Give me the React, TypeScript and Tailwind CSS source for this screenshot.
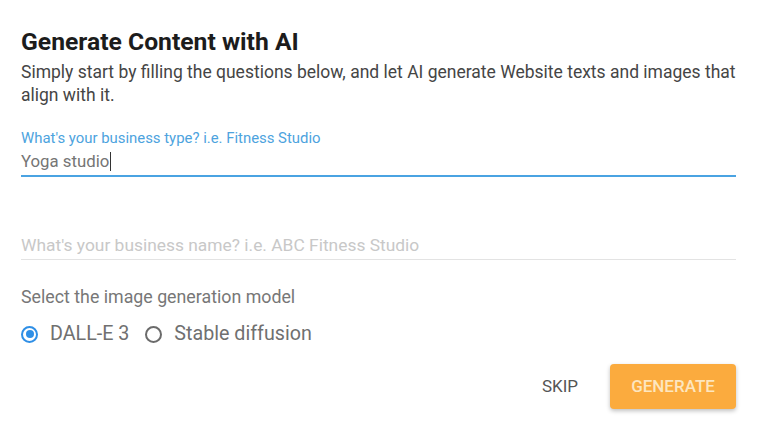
import { useState } from "react";

const font = { fontFamily: "Roboto, 'Liberation Sans', sans-serif" };

const Radio = ({ checked, label, onClick }: { checked: boolean; label: string; onClick: () => void }) => (
  <label className="flex items-center gap-[12px] cursor-pointer" onClick={onClick}>
    <span
      className={`flex h-[17px] w-[17px] items-center justify-center rounded-full border-2 ${
        checked ? "border-[#2f8fe6]" : "border-[#6b6b6b]"
      }`}
    >
      {checked && <span className="h-[8px] w-[8px] rounded-full bg-[#2f8fe6]" />}
    </span>
    <span className="text-[19.7px] leading-[24px] text-[#707070]">{label}</span>
  </label>
);

const App = () => {
  const [model, setModel] = useState("dalle");

  return (
    <div className="min-h-[435px] w-[761px] bg-white pl-[21px] pr-[25px] pt-[27px]" style={font}>
      {/* Header */}
      <h1 className="text-[24.7px] font-bold leading-[30px] text-[#1c1c1c]">Generate Content with AI</h1>
      <p className="mt-[4px] whitespace-nowrap text-[17.5px] leading-[23px] text-[#454545]">
        Simply start by filling the questions below, and let AI generate Website texts and images that
        <br />
        align with it.
      </p>

      {/* Business type field */}
      <div className="mt-[22px]">
        <div className="text-[14.9px] leading-[18px] text-[#4da3de]">What's your business type? i.e. Fitness Studio</div>
        <div className="flex items-center pt-[3px] pb-[3px] text-[16.8px] leading-[22px] text-[#757575]">
          Yoga studio<span className="ml-[1px] inline-block h-[19px] w-[1px] bg-[#333]" />
        </div>
        <div className="h-[2px] bg-[#4aa3e2]" />
      </div>

      {/* Business name field */}
      <div className="mt-[57px]">
        <div className="pb-[3px] text-[17.4px] leading-[22px] text-[#c8c8c8]">
          What's your business name? i.e. ABC Fitness Studio
        </div>
        <div className="h-[1px] bg-[#e3e3e3]" />
      </div>

      {/* Model selection */}
      <div className="mt-[26px] text-[17.8px] leading-[22px] text-[#777]">Select the image generation model</div>
      <div className="mt-[14px] flex items-center gap-[16px]">
        <Radio checked={model === "dalle"} label="DALL-E 3" onClick={() => setModel("dalle")} />
        <Radio checked={model === "sd"} label="Stable diffusion" onClick={() => setModel("sd")} />
      </div>

      {/* Actions */}
      <div className="mt-[18px] flex items-center justify-end gap-[32px]">
        <button className="text-[17px] uppercase text-[#555]">Skip</button>
        <button className="h-[45px] w-[126px] rounded-[4px] bg-[#fbab3e] text-[17px] font-medium uppercase text-[#fde6bf] shadow-[0_2px_4px_rgba(0,0,0,0.25)]">
          Generate
        </button>
      </div>
    </div>
  );
};

export default App;
